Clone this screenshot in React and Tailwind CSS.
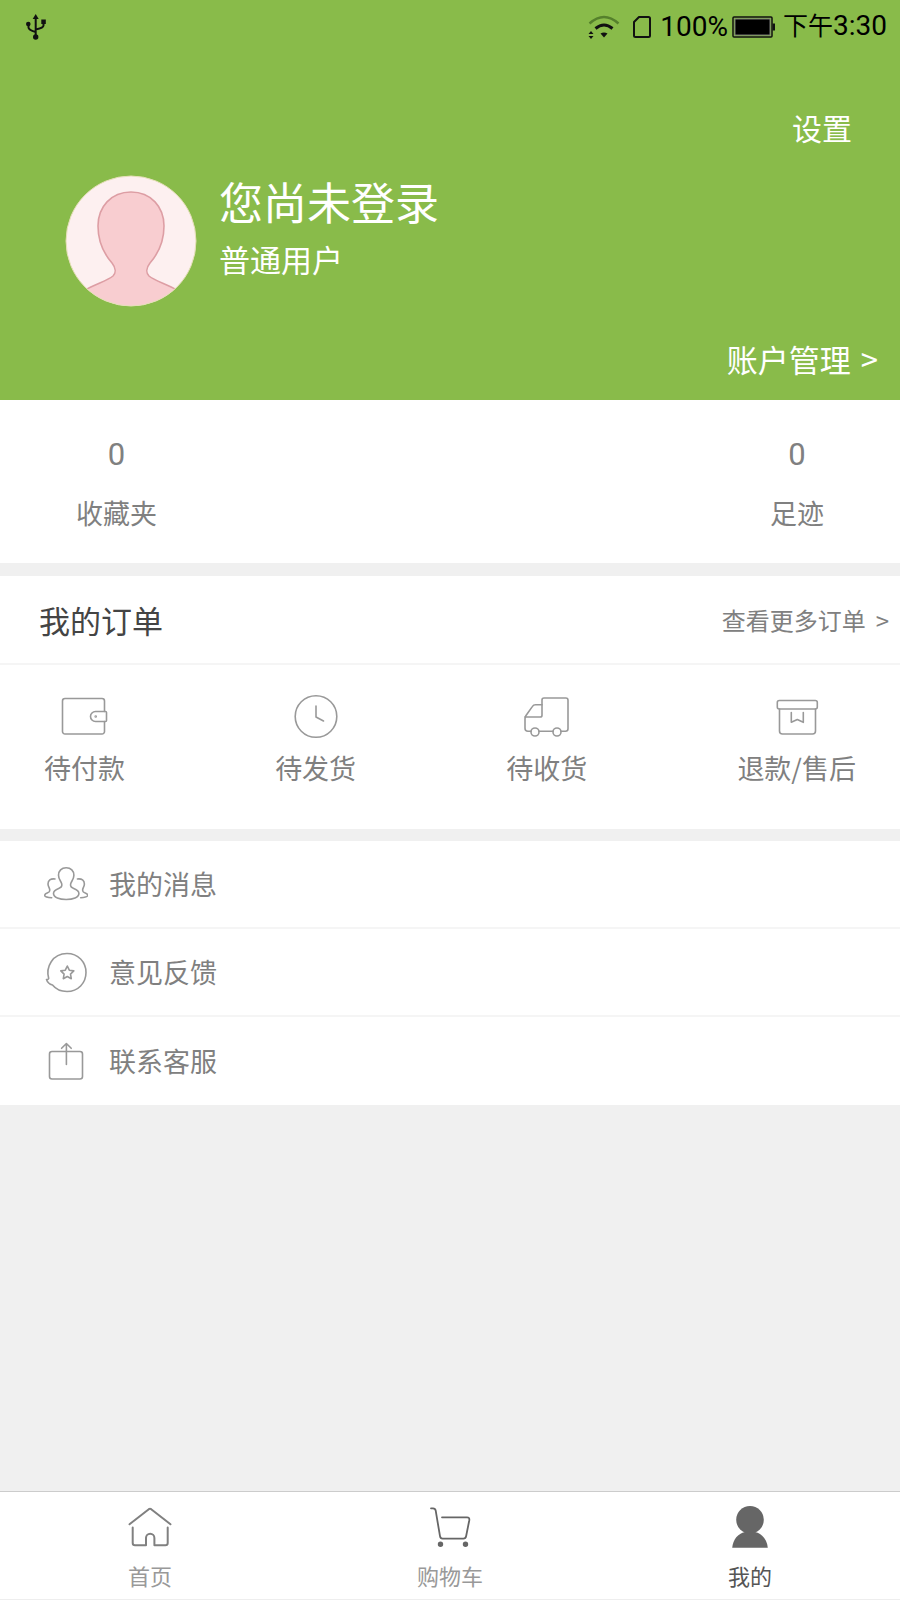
const orders = [
  { label: "待付款", Icon: WalletIcon },
  { label: "待发货", Icon: ClockIcon },
  { label: "待收货", Icon: TruckIcon },
  { label: "退款/售后", Icon: BoxIcon },
];

const menu = [
  { label: "我的消息", Icon: PeopleIcon },
  { label: "意见反馈", Icon: FeedbackIcon },
  { label: "联系客服", Icon: ShareIcon },
];

const tabs = [
  { label: "首页", Icon: HomeIcon, active: false },
  { label: "购物车", Icon: CartIcon, active: false },
  { label: "我的", Icon: PersonIcon, active: true },
];

function OrderSvg({ children }) {
  return (
    <svg viewBox="0 0 48 48" className="size-12" fill="none" stroke="#999" strokeWidth="1.6" strokeLinejoin="round" strokeLinecap="round" aria-hidden="true">
      {children}
    </svg>
  );
}

function WalletIcon() {
  return (
    <OrderSvg>
      <path d="M43.500 19.500V9a2.500 2.500 0 0 0-2.500-2.500H4A2.500 2.500 0 0 0 1.500 9v30.500A2.500 2.500 0 0 0 4 42h37a2.500 2.500 0 0 0 2.500-2.500v-10" />
      <path d="M34.500 19.500h10q1 0 1 1v8q0 1-1 1h-10a5 5 0 0 1 0-10z" />
      <circle cx="34.700" cy="24.500" r="0.500" />
    </OrderSvg>
  );
}

function ClockIcon() {
  return (
    <OrderSvg>
      <circle cx="24" cy="24.500" r="20.800" />
      <path d="M24 14v11l7.500 4" />
    </OrderSvg>
  );
}

function TruckIcon() {
  return (
    <OrderSvg>
      <path d="M38 39.200h4.500a2.500 2.500 0 0 0 2.500-2.500V8.200Q45 6 42.800 6H21q-2 0-2 2v15.200q0 1.800-1.800 1.800H2" />
      <path d="M19 12.800h-6.500q-2 0-3.200 1.800L3 23.500q-1 1.500-1 3.500v9.200q0 3 3 3h3M16 39.200h14" />
      <circle cx="12" cy="40" r="4" />
      <circle cx="34" cy="40" r="4" />
    </OrderSvg>
  );
}

function BoxIcon() {
  return (
    <OrderSvg>
      <rect x="4.300" y="8.500" width="40" height="8.500" rx="2" />
      <path d="M6.500 17v22a3 3 0 0 0 3 3h30a3 3 0 0 0 3-3V17" />
      <path d="M18.300 20.500v9.800l6-2.800 6 2.800v-9.800" />
    </OrderSvg>
  );
}

function MenuSvg({ children }) {
  return (
    <svg viewBox="0 0 44 44" className="size-11" fill="none" stroke="#999" strokeWidth="1.6" strokeLinejoin="round" strokeLinecap="round" aria-hidden="true">
      {children}
    </svg>
  );
}

function PeopleIcon() {
  return (
    <MenuSvg>
      <path d="M22.200 5.800c-4.700 0-7.700 3.200-7.700 7.400 0 3.300 1.600 5.200 2.700 7.200 1.200 2.300.9 4.600-1.700 5.700-3 1.200-6 2-6 5.400 0 4 6 6 12.700 6s12.700-2 12.700-6c0-3.400-3-4.200-6-5.400-2.600-1.100-2.900-3.400-1.700-5.700 1.100-2 2.700-3.900 2.700-7.200 0-4.200-3-7.400-7.700-7.400z" />
      <path d="M11 17c-4.500-.6-7 1.500-7 5 0 3.500 3.500 5.500 1 8-1.500 1.200-4.300 1-4.300 3.400 0 1.700 3.300 2 7 2.300" />
      <path d="M33.400 17c4.500-.6 7 1.500 7 5 0 3.500-3.500 5.500-1 8 1.500 1.200 4.300 1 4.300 3.400 0 1.700-3.300 2-7 2.300" />
    </MenuSvg>
  );
}

function FeedbackIcon() {
  return (
    <MenuSvg>
      <path d="M4.700 28.500C1.500 17 8.500 3.500 23 3.500c11 0 19 8.500 19 19s-8 19-19 19c-7 0-11-2.200-14.500-6.500-3-.8-5-2.300-6-5.500 1 .3 1.800-.2 2.200-1z" />
      <path d="M23.300 16l2 4.200 4.500.7-3.300 3.200.8 4.600-4-2.200-4 2.200.8-4.600-3.300-3.200 4.500-.7z" />
    </MenuSvg>
  );
}

function ShareIcon() {
  return (
    <MenuSvg>
      <rect x="5.500" y="12.500" width="33" height="27.500" rx="2.500" />
      <path d="M22.400 25.500V4.500M17.600 9.300l4.800-4.800 4.800 4.800" />
    </MenuSvg>
  );
}

function HomeIcon() {
  return (
    <svg viewBox="0 0 48 48" className="size-12" fill="none" stroke="#808080" strokeWidth="2" strokeLinecap="round" strokeLinejoin="round" aria-hidden="true">
      <path d="M3.500 21.300L22.800 6.200q1.200-.8 2.400 0l19.300 15.100" />
      <path d="M6.700 24.500v15.500q0 2.300 2.300 2.300h11v-7.300a4.200 4.200 0 0 1 8.400 0v7.300h11q2.300 0 2.300-2.300V24.500" />
    </svg>
  );
}

function CartIcon() {
  return (
    <svg viewBox="0 0 48 48" className="size-12" fill="none" stroke="#666" strokeWidth="1.800" strokeLinecap="round" strokeLinejoin="round" aria-hidden="true">
      <path d="M5 5.300h2q2.300 0 2.700 2.400l4.300 25.500q.4 2.500 2.600 2.500h20.800q2.300 0 2.700-2.500l3.200-16q.4-2.900-2.300-2.900H16" />
      <circle cx="14.500" cy="41.200" r="1.800" fill="#666" />
      <circle cx="39.500" cy="41.200" r="1.800" fill="#666" />
    </svg>
  );
}

function PersonIcon() {
  return (
    <svg viewBox="0 0 48 48" className="size-12" fill="#666" aria-hidden="true">
      <circle cx="24" cy="16.800" r="13.800" />
      <path d="M6.200 44.700C7 36.500 12 30.500 19 29h10c7 1.500 12 7.500 12.800 15.700z" />
    </svg>
  );
}

function Avatar() {
  return (
    <svg viewBox="0 0 132 132" className="size-[132px] shrink-0" role="img" aria-label="头像">
      <clipPath id="avatar">
        <circle cx="66" cy="66" r="65" />
      </clipPath>
      <circle cx="66" cy="66" r="65" fill="#fdf0f0" />
      <path
        clipPath="url(#avatar)"
        d="M66 17c-20 0-33 15-33 34 0 16 7 29 14 37 4 5 4 10 1 13-6 5-18 8-28 14v30h92v-30c-10-6-22-9-28-14-3-3-3-8 1-13 7-8 14-21 14-37 0-19-13-34-33-34z"
        fill="#f8cdd0"
        stroke="#dd9ea4"
        strokeWidth="1.600"
      />
      <circle cx="66" cy="66" r="65" fill="none" stroke="#e5dfb8" strokeWidth="1" />
    </svg>
  );
}

function StatusBar() {
  return (
    <div className="h-[53px] pl-[25px] pr-[13px] flex items-center justify-between font-[Roboto,'Noto_Sans_CJK_SC',sans-serif] text-black text-[28px] leading-8">
      <svg viewBox="0 0 22 28" className="w-[22px] h-7" fill="none" stroke="#111" strokeWidth="2" aria-hidden="true">
        <path d="M10.700 24V5M3.500 11v3.500q0 2.500 7.200 4.500M18.500 9v3.500q0 2.500-7.800 4" />
        <path d="M10.700 1l3 5h-6z" fill="#111" stroke="none" />
        <circle cx="10.700" cy="24" r="2.700" fill="#111" stroke="none" />
        <circle cx="3.300" cy="11" r="2.300" fill="#111" stroke="none" />
        <rect x="16.300" y="6.500" width="4.500" height="4.500" fill="#111" stroke="none" />
      </svg>
      <div className="flex items-center">
        <svg viewBox="0 0 32 24" className="w-8 h-6" fill="none" aria-hidden="true">
          <path d="M1.500 8.500Q16-4.500 30.500 8.500" stroke="#55802c" strokeWidth="2.500" />
          <path d="M7.500 13.500Q16 6.500 24.500 13.500" stroke="#111" strokeWidth="3" />
          <path d="M12.500 18.500q3.500-2 7 0L16 22.500z" fill="#111" />
          <path d="M.5 19L3 16l2.500 3zM.5 21L3 24l2.500-3z" fill="#111" />
        </svg>
        <svg viewBox="0 0 20 24" className="ml-3 w-5 h-6" fill="none" stroke="#111" strokeWidth="2" strokeLinejoin="round" aria-hidden="true">
          <path d="M7 2h9.500q1.500 0 1.500 1.500v17q0 1.500-1.500 1.500h-13Q2 22 2 20.500V7z" />
        </svg>
        <span className="ml-2">100%</span>
        <svg viewBox="0 0 44 24" className="ml-1 w-11 h-6" aria-hidden="true">
          <rect x="1" y="2" width="39" height="20" rx="1" fill="none" stroke="#111" strokeWidth="1.500" />
          <rect x="3" y="4" width="35" height="16" fill="#000" stroke="#777" strokeWidth="1" />
          <rect x="40.500" y="8.500" width="2.500" height="7" fill="#111" />
        </svg>
        <span className="ml-[7px]"><span className="text-[25px]">下午</span>3:30</span>
      </div>
    </div>
  );
}

export default function App() {
  return (
    <div className="min-h-screen bg-[#f0f0f0] flex flex-col font-['Noto_Sans_CJK_SC',sans-serif] text-[#808080]">
      <header className="bg-[#89bb4a] text-white pb-[21px]">
        <StatusBar />
        <div className="pt-[54px] pr-12 flex justify-end">
          <button className="text-[30px] leading-10">设置</button>
        </div>
        <div className="mt-7 pl-[65px] flex gap-[22px]">
          <Avatar />
          <div>
            <h1 className="text-[44px] leading-[52px]">您尚未登录</h1>
            <p className="mt-3 text-[31px] leading-10">普通用户</p>
          </div>
        </div>
        <div className="mt-8 pr-[22px] flex justify-end">
          <a href="#account" className="text-[31px] leading-10 flex gap-2.5">
            账户管理 <span>&gt;</span>
          </a>
        </div>
      </header>

      <section className="bg-white px-[76px] pt-[35px] pb-[30px] flex justify-between text-center">
        <a href="#favorites">
          <div className="font-[Roboto] text-[31px] leading-10">0</div>
          <div className="mt-[18px] text-[27px] leading-10">收藏夹</div>
        </a>
        <a href="#history">
          <div className="font-[Roboto] text-[31px] leading-10">0</div>
          <div className="mt-[18px] text-[27px] leading-10">足迹</div>
        </a>
      </section>

      <section className="mt-[13px] bg-white">
        <div className="h-[89px] pl-[39px] pr-[11px] flex items-center justify-between border-b-2 border-[#f5f5f5]">
          <h2 className="text-[31px] leading-10 text-[#444]">我的订单</h2>
          <a href="#orders" className="text-[24px] leading-10 flex gap-2.5">
            查看更多订单 <span>&gt;</span>
          </a>
        </div>
        <div className="px-11 pt-[27px] pb-[41px] flex justify-between">
          {orders.map(({ label, Icon }) => (
            <a key={label} href="#orders" className="flex flex-col items-center">
              <Icon />
              <span className="mt-2 text-[27px] leading-10">{label}</span>
            </a>
          ))}
        </div>
      </section>

      <section className="mt-3 bg-white divide-y-2 divide-[#f5f5f5]">
        {menu.map(({ label, Icon }) => (
          <a key={label} href="#menu" className="h-[88px] px-11 flex items-center gap-[21px] text-[27px] leading-10">
            <Icon />
            {label}
          </a>
        ))}
      </section>

      <nav className="mt-auto bg-white border-t border-b border-t-[#ccc] border-b-[#eee] pt-[11px] pb-2 grid grid-cols-3">
        {tabs.map(({ label, Icon, active }) => (
          <button key={label} className="flex flex-col items-center">
            <Icon />
            <span className={`mt-2 text-[22px] leading-8 ${active ? "text-[#555]" : "text-[#999]"}`}>
              {label}
            </span>
          </button>
        ))}
      </nav>
    </div>
  );
}
